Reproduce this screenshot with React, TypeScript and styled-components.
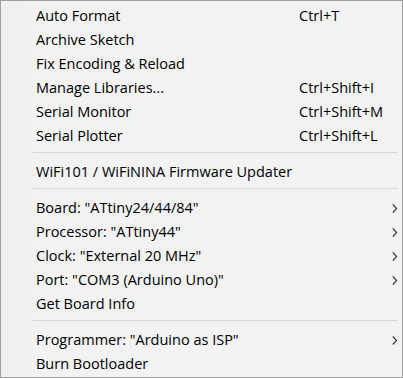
import React from 'react';
import styled, { createGlobalStyle } from 'styled-components';

const GlobalStyle = createGlobalStyle`
  html, body {
    margin: 0;
    padding: 0;
    background: #f2f2f2;
  }
`;

const Menu = styled.div`
  box-sizing: border-box;
  width: 403px;
  height: 378px;
  padding: 2px 0;
  border: 1px solid #a0a0a0;
  background: linear-gradient(to right, #f0f0f0 0, #f0f0f0 29px, #f2f2f2 29px);
  font-family: 'Open Sans', 'Liberation Sans', sans-serif;
  font-size: 14.5px;
  color: #000;
  display: flex;
  flex-direction: column;
`;

const Item = styled.div`
  box-sizing: border-box;
  display: grid;
  grid-template-columns: 35px 1fr 93px 10px;
  align-items: center;
  height: 24px;
  padding-top: 2px;
  line-height: 22px;
  white-space: nowrap;
`;

const Label = styled.span`
  grid-column: 2;
`;

const Shortcut = styled.span`
  grid-column: 3;
`;

const Arrow = styled.span`
  grid-column: 4;
  display: flex;
  align-items: center;
`;

const Separator = styled.div`
  height: 12px;
  padding-left: 32px;
  padding-right: 4px;

  &::after {
    content: '';
    display: block;
    margin-top: 5px;
    height: 1px;
    background: #d7d7d7;
  }
`;

type Entry = { label: string; shortcut?: string; sub?: boolean } | 'sep';

const entries: Entry[] = [
  { label: 'Auto Format', shortcut: 'Ctrl+T' },
  { label: 'Archive Sketch' },
  { label: 'Fix Encoding & Reload' },
  { label: 'Manage Libraries...', shortcut: 'Ctrl+Shift+I' },
  { label: 'Serial Monitor', shortcut: 'Ctrl+Shift+M' },
  { label: 'Serial Plotter', shortcut: 'Ctrl+Shift+L' },
  'sep',
  { label: 'WiFi101 / WiFiNINA Firmware Updater' },
  'sep',
  { label: 'Board: "ATtiny24/44/84"', sub: true },
  { label: 'Processor: "ATtiny44"', sub: true },
  { label: 'Clock: "External 20 MHz"', sub: true },
  { label: 'Port: "COM3 (Arduino Uno)"', sub: true },
  { label: 'Get Board Info' },
  'sep',
  { label: 'Programmer: "Arduino as ISP"', sub: true },
  { label: 'Burn Bootloader' },
];

const Chevron = () => (
  <svg width="6" height="9" viewBox="0 0 6 9">
    <polyline points="0.8,0.5 4.6,4.5 0.8,8.5" fill="none" stroke="#333" strokeWidth="1.1" />
  </svg>
);

const App: React.FC = () => {
  return (
    <>
      <GlobalStyle />
      <Menu>
        {entries.map((e, i) =>
          e === 'sep' ? (
            <Separator key={i} />
          ) : (
            <Item key={i}>
              <Label>{e.label}</Label>
              {e.shortcut && <Shortcut>{e.shortcut}</Shortcut>}
              {e.sub && (
                <Arrow>
                  <Chevron />
                </Arrow>
              )}
            </Item>
          )
        )}
      </Menu>
    </>
  );
};

export default App;
